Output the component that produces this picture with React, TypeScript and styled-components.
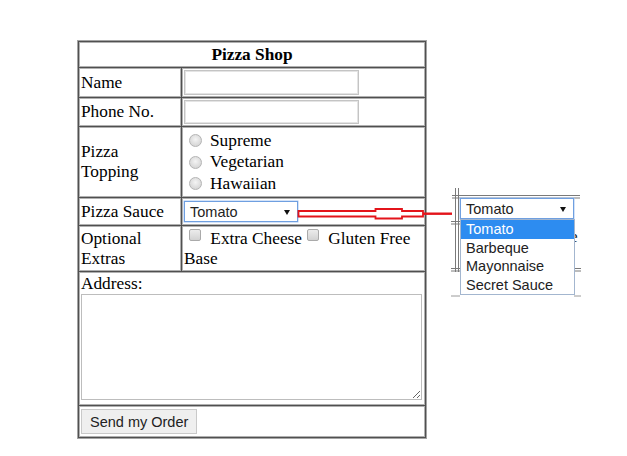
import React from "react";
import styled, { createGlobalStyle } from "styled-components";

const GlobalStyle = createGlobalStyle`
  html, body { margin: 0; padding: 0; background: #fff; }
  body { font-family: "Liberation Serif", "Times New Roman", serif; }
`;

const Stage = styled.div`
  position: relative;
  width: 627px;
  height: 456px;
  box-sizing: border-box;
  padding: 40px 0 0 77px;
  overflow: hidden;
`;

const OrderForm = styled.form`
  display: grid;
  grid-template-columns: 102px 243px;
  grid-template-rows: 25px 29px 28px 70px 27px 45px 133px 31px;
  gap: 1px;
  padding: 1px;
  width: 350px;
  box-sizing: border-box;
  background: #505050;
  border: 1px solid #a4a4a4;
  font-family: "Liberation Serif", "Times New Roman", serif;
  font-size: 17.3px;
  color: #000;
`;

const Cell = styled.div<{ $span?: boolean; $top?: boolean; $center?: boolean }>`
  grid-column: ${(p) => (p.$span ? "1 / -1" : "auto")};
  background: #fff;
  border: 1px solid #b0b0b0;
  padding: 1px;
  box-sizing: border-box;
  display: flex;
  flex-direction: column;
  justify-content: ${(p) => (p.$top ? "flex-start" : "center")};
  align-items: ${(p) => (p.$center ? "center" : "flex-start")};
  min-width: 0;
`;

const Title = styled.div`
  font-weight: bold;
  line-height: normal;
`;

const FieldLabel = styled.label`
  line-height: normal;
`;

const TextField = styled.input`
  width: 175px;
  height: 25px;
  box-sizing: border-box;
  margin: 0;
  border: 1px solid #c4c4c4;
  box-shadow: inset 0 0 0 1px #e4e4e4;
  background: #fff;
  padding: 1px 3px;
  font-family: "Liberation Sans", Arial, sans-serif;
  font-size: 14.5px;
  outline: none;
`;

const OptionRow = styled.label`
  display: flex;
  align-items: center;
  height: 21.5px;
  line-height: normal;
`;

const Radio = styled.input`
  appearance: none;
  width: 13px;
  height: 13px;
  margin: 0 8px 0 5px;
  border-radius: 50%;
  border: 1px solid #b4b4b4;
  box-sizing: border-box;
  background: radial-gradient(circle at 50% 40%, #f4f4f4 0%, #dedede 55%, #cfcfcf 100%);
  flex: none;
`;

const SelectBox = styled.div<{ $w: number; $h: number }>`
  position: relative;
  width: ${(p) => p.$w}px;
  height: ${(p) => p.$h}px;
  box-sizing: border-box;
  border: 1px solid #6f9fe0;
  box-shadow: 0 0 0 0.5px #a9c8f2;
  background: #fff;
  display: flex;
  align-items: center;
  justify-content: space-between;
  padding: 0 7px 0 5px;
  font-family: "Liberation Sans", Arial, sans-serif;
  font-size: 14.5px;
  color: #222;
  flex: none;
`;

const Caret = styled.span`
  width: 0;
  height: 0;
  border-left: 3px solid transparent;
  border-right: 3px solid transparent;
  border-top: 5px solid #111;
  margin-top: 1px;
`;

const ExtrasText = styled.div`
  line-height: 20px;
`;

const Checkbox = styled.input`
  appearance: none;
  display: inline-block;
  width: 12px;
  height: 12px;
  margin: 0 5px 0 5px;
  vertical-align: 3px;
  box-sizing: border-box;
  border: 1px solid #aaa;
  border-radius: 2px;
  background: linear-gradient(#ececec, #d2d2d2);
`;

const AddressLabel = styled.label`
  line-height: 20px;
`;

const AddressArea = styled.textarea`
  width: 341px;
  height: 106px;
  margin: 0;
  box-sizing: border-box;
  border: 1px solid #bdbdbd;
  background: #fff;
  font-family: "Liberation Mono", monospace;
  font-size: 13px;
`;

const SubmitButton = styled.button`
  height: 25px;
  margin: 0;
  padding: 0 8px;
  box-sizing: border-box;
  border: 1px solid #c9c9c9;
  background: #efefef;
  font-family: "Liberation Sans", Arial, sans-serif;
  font-size: 14.5px;
  color: #222;
`;

const Pointer = styled.svg`
  position: absolute;
  left: 296px;
  top: 204px;
  width: 160px;
  height: 18px;
  overflow: visible;
`;

const Callout = styled.div`
  position: absolute;
  left: 448px;
  top: 186px;
  width: 140px;
  height: 116px;
  box-sizing: border-box;
  padding: 12px 0 0 12px;
  display: flex;
  flex-direction: column;
`;

const CalloutLines = styled.svg`
  position: absolute;
  inset: 0;
  width: 140px;
  height: 116px;
`;

const DropList = styled.ul`
  position: relative;
  list-style: none;
  margin: 0;
  padding: 0;
  width: 115px;
  box-sizing: border-box;
  border: 1px solid #a3b6cf;
  background: #fff;
  font-family: "Liberation Sans", Arial, sans-serif;
  font-size: 14.5px;
  color: #222;
`;

const DropItem = styled.li<{ $active?: boolean }>`
  height: 18.5px;
  line-height: 18.5px;
  padding-left: 5px;
  background: ${(p) => (p.$active ? "#2d8cf0" : "transparent")};
  color: ${(p) => (p.$active ? "#fff" : "#222")};
`;

const sauces = ["Tomato", "Barbeque", "Mayonnaise", "Secret Sauce"];
const toppings = ["Supreme", "Vegetarian", "Hawaiian"];

export default function App() {
  return (
    <>
      <GlobalStyle />
      <Stage>
        <OrderForm onSubmit={(e) => e.preventDefault()}>
          <Cell $span $center>
            <Title>Pizza Shop</Title>
          </Cell>

          <Cell>
            <FieldLabel>Name</FieldLabel>
          </Cell>
          <Cell>
            <TextField type="text" />
          </Cell>

          <Cell>
            <FieldLabel>Phone No.</FieldLabel>
          </Cell>
          <Cell>
            <TextField type="text" />
          </Cell>

          <Cell>
            <FieldLabel>
              Pizza
              <br />
              Topping
            </FieldLabel>
          </Cell>
          <Cell>
            {toppings.map((t) => (
              <OptionRow key={t}>
                <Radio type="radio" name="topping" />
                {t}
              </OptionRow>
            ))}
          </Cell>

          <Cell>
            <FieldLabel>Pizza Sauce</FieldLabel>
          </Cell>
          <Cell>
            <SelectBox $w={114} $h={21}>
              <span>Tomato</span>
              <Caret />
            </SelectBox>
          </Cell>

          <Cell>
            <FieldLabel>
              Optional
              <br />
              Extras
            </FieldLabel>
          </Cell>
          <Cell>
            <ExtrasText>
              <Checkbox type="checkbox" /> Extra Cheese
              <Checkbox type="checkbox" /> Gluten Free
              <br />
              Base
            </ExtrasText>
          </Cell>

          <Cell $span $top>
            <AddressLabel>Address:</AddressLabel>
            <AddressArea />
          </Cell>

          <Cell $span>
            <SubmitButton type="submit">Send my Order</SubmitButton>
          </Cell>
        </OrderForm>

        <Pointer viewBox="296 204 160 18">
          <path
            d="M298.5 211 H375.5 V209 H402 V211 H423 V216.5 H402 V218.5 H375.5 V216.5 H298.5 Z"
            fill="#fff"
            stroke="#e3141b"
            strokeWidth="1.8"
          />
          <line x1="423" y1="213.7" x2="452" y2="213.7" stroke="#e3141b" strokeWidth="2.4" />
        </Pointer>

        <Callout>
          <CalloutLines viewBox="0 0 140 116">
            <g stroke="#7a7a7a" strokeWidth="1" fill="none">
              <line x1="4" y1="9.5" x2="132" y2="9.5" />
              <line x1="4" y1="12" x2="132" y2="12" />
              <line x1="7.5" y1="2" x2="7.5" y2="86" />
              <line x1="10.5" y1="2" x2="10.5" y2="86" />
              <line x1="3" y1="35.5" x2="12" y2="35.5" />
              <line x1="3" y1="38" x2="12" y2="38" />
              <line x1="3" y1="82.5" x2="12" y2="82.5" />
              <line x1="3" y1="85" x2="12" y2="85" />
              <line x1="126" y1="82.5" x2="133" y2="82.5" />
              <line x1="126" y1="85" x2="133" y2="85" />
              <line x1="3" y1="110" x2="12" y2="110" stroke="#9a9a9a" />
              <line x1="126" y1="110" x2="133" y2="110" stroke="#9a9a9a" />
            </g>
            <text
              x="122"
              y="56"
              fontFamily="Liberation Serif, serif"
              fontSize="17.3"
              fill="#222"
            >
              e
            </text>
          </CalloutLines>
          <SelectBox $w={114} $h={21}>
            <span>Tomato</span>
            <Caret />
          </SelectBox>
          <DropList>
            {sauces.map((s, i) => (
              <DropItem key={s} $active={i === 0}>
                {s}
              </DropItem>
            ))}
          </DropList>
        </Callout>
      </Stage>
    </>
  );
}
